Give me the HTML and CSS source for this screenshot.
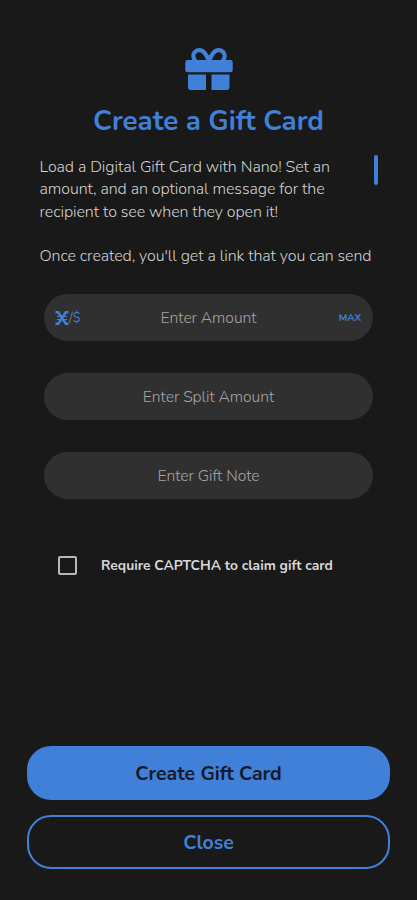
FILE: index.html
```html
<!DOCTYPE html>
<html lang="en">
<head>
    <meta charset="UTF-8">
    <meta name="viewport" content="width=device-width, initial-scale=1.0">
    <title>Create a Gift Card</title>
    <link rel="stylesheet" href="styles.css">
</head>
<body>

    <div class="gift-screen">
        <svg class="gift-icon" viewBox="0 0 48 42" width="48" height="42">
            <!-- Bow -->
            <path d="M24 12.500C21 6 18.500 2.100 14.500 2.100C10.500 2.100 8.300 5 8.300 8C8.300 10.500 9.500 12 11 14M24 12.500C27 6 29.500 2.100 33.500 2.100C37.500 2.100 39.700 5 39.700 8C39.700 10.500 38.500 12 37 14" fill="none" stroke="#4080d8" stroke-width="4.200"/>
            <!-- Lid and box -->
            <rect x="0.300" y="12" width="47.400" height="12.300" rx="2" fill="#4080d8"/>
            <path d="M3 26.500H21V42H6Q3 42 3 39ZM26.500 26.500H44.500V39Q44.500 42 41.500 42H26.500Z" fill="#4080d8"/>
        </svg>
        <h1 class="title">Create a Gift Card</h1>

        <div class="description">
            <p>
                Load a Digital Gift Card with Nano! Set an<br>
                amount, and an optional message for the<br>
                recipient to see when they open it!
            </p>
            <p>Once created, you'll get a link that you can send</p>
            <div class="scrollbar"></div>
        </div>

        <div class="fields">
            <div class="field">
                <div class="currency">
                    <svg viewBox="0 0 14 14" width="14" height="14">
                        <path d="M0.500 1.300H3.200L10.800 12.700H13.500M13.500 1.300H10.800L3.200 12.700H0.500" fill="none" stroke="#4080d8" stroke-width="2.600"/>
                        <path d="M2 5.500H12M2 8.500H12" fill="none" stroke="#4080d8" stroke-width="1.200"/>
                    </svg>
                    <span class="slash">/</span><span>$</span>
                </div>
                <span class="placeholder">Enter Amount</span>
                <span class="max">MAX</span>
            </div>
            <div class="field"><span class="placeholder">Enter Split Amount</span></div>
            <div class="field"><span class="placeholder">Enter Gift Note</span></div>
        </div>

        <div class="captcha">
            <span class="checkbox"></span>
            <span class="captcha-label">Require CAPTCHA to claim gift card</span>
        </div>

        <div class="buttons">
            <button class="btn btn-primary">Create Gift Card</button>
            <button class="btn btn-outline">Close</button>
        </div>
    </div>

</body>
</html>
```
FILE: styles.css
```css
* {
    box-sizing: border-box;
}
body {
    margin: 0;
    background-color: #191919;
    font-family: Nunito, Lato, "Open Sans", sans-serif;
}
.gift-screen {
    display: flex;
    flex-direction: column;
    height: 900px;
    padding: 48px 27px 31px;
    overflow: hidden;
}
.gift-icon {
    display: block;
    margin-left: 158px;
}
.title {
    margin: 13px 0 0;
    font-size: 27.700px;
    line-height: 36px;
    font-weight: 700;
    text-align: center;
    color: #4080d8;
    white-space: nowrap;
}
.description {
    position: relative;
    height: 112px;
    margin: 17px 0 0 12.500px;
    font-size: 16px;
    font-weight: 300;
    line-height: 22.400px;
    letter-spacing: -0.080px;
    color: #d2d2d2;
    white-space: nowrap;
}
.description p {
    margin: 0 0 22px;
}
.scrollbar {
    position: absolute;
    top: -1px;
    right: 12px;
    width: 4px;
    height: 30px;
    border-radius: 2px;
    background-color: #4080d8;
}
.fields {
    display: flex;
    flex-direction: column;
    gap: 32px;
    margin: 26px 17px 0 17px;
}
.field {
    display: grid;
    grid-template-columns: 50px 1fr 50px;
    align-items: center;
    height: 47px;
    border-radius: 24px;
    background-color: #303030;
}
.placeholder {
    grid-column: 2;
    font-size: 15.700px;
    font-weight: 300;
    letter-spacing: -0.050px;
    text-align: center;
    color: #a4a4a4;
    white-space: nowrap;
}
.currency {
    display: flex;
    align-items: center;
    padding-left: 11px;
    font-size: 13px;
    color: #4080d8;
}
.slash {
    color: #777;
}
.max {
    padding-right: 12px;
    font-size: 9.800px;
    font-weight: 700;
    text-align: right;
    color: #4080d8;
}
.captcha {
    display: flex;
    align-items: center;
    gap: 24px;
    height: 20px;
    margin: 56px 0 0 31px;
}
.checkbox {
    width: 19px;
    height: 19px;
    border: 2px solid #b8b8b8;
    border-radius: 2px;
}
.captcha-label {
    font-size: 13.850px;
    font-weight: 700;
    color: #d8d8d8;
    white-space: nowrap;
}
.buttons {
    display: flex;
    flex-direction: column;
    gap: 15px;
    margin-top: auto;
}
.btn {
    height: 54px;
    padding: 0;
    border: 2px solid #4080d8;
    border-radius: 24px;
    font-family: inherit;
    font-size: 19.500px;
    font-weight: 700;
}
.btn-primary {
    background-color: #4080d8;
    color: #151a28;
}
.btn-outline {
    background-color: transparent;
    color: #4080d8;
}
```
